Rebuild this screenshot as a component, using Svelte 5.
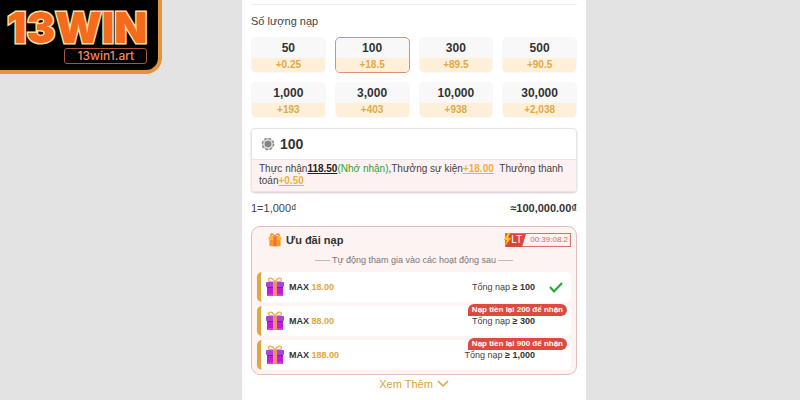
<script>
  let amounts = [
    { value: 50, bonus: '+0.25' },
    { value: 100, bonus: '+18.5' },
    { value: 300, bonus: '+89.5' },
    { value: 500, bonus: '+90.5' },
    { value: 1000, bonus: '+193' },
    { value: 3000, bonus: '+403' },
    { value: 10000, bonus: '+938' },
    { value: 30000, bonus: '+2,038' }
  ];

  let offers = [
    { max: '18.00', total: '100', done: true },
    { max: '88.00', total: '300', hint: 'Nạp tiền lại 200 để nhận' },
    { max: '188.00', total: '1,000', hint: 'Nạp tiền lại 900 để nhận' }
  ];

  let selected = 100;
  let amount = '100';

  const format = (n) => n.toLocaleString('en-US');

  function choose(item) {
    selected = item.value;
    amount = format(item.value);
  }
</script>

<a class="logo" href="/">
  <span class="logo-name">13WIN</span>
  <span class="logo-site">13win1.art</span>
</a>

<main>
  <h2 class="title">Số lượng nạp</h2>

  <div class="amounts">
    {#each amounts as item (item.value)}
      <button type="button" class="amount" class:active={item.value === selected} on:click={() => choose(item)}>
        <strong>{format(item.value)}</strong>
        <span>{item.bonus}</span>
      </button>
    {/each}
  </div>

  <div class="entry">
    <label class="entry-field">
      <svg width="14" height="14" viewBox="0 0 14 14" aria-hidden="true">
        <circle cx="7" cy="7" r="5.6" fill="#d8d8d8" stroke="#c4c4c4" stroke-width="1" />
        <circle cx="7" cy="7" r="5.6" fill="none" stroke="#888" stroke-width="1.6" stroke-dasharray="2.2 2.2" />
        <circle cx="7" cy="7" r="3.3" fill="#858585" />
      </svg>
      <input type="text" aria-label="Số lượng nạp" bind:value={amount} />
    </label>
    <p class="received">
      Thực nhận<b class="sum">118.50</b><span class="green">(Nhớ nhận)</span>,Thưởng sự kiện<b class="plus">+18.00</b>
      &nbsp;Thưởng thanh toán<b class="plus">+0.50</b>
    </p>
  </div>

  <div class="rate">
    <span>1=1,000₫</span>
    <strong>≈100,000.00₫</strong>
  </div>

  <section class="promo">
    <header>
      <svg width="14" height="14" viewBox="0 0 20 20" aria-hidden="true">
        <path d="M10 5C7 0 3 1 4 4c1 2 4 1 6 1 2 0 5 1 6-1 1-3-3-4-6 1z" fill="none" stroke="#f08a3c" stroke-width="2" />
        <rect x="2" y="9" width="16" height="10" rx="2" fill="#f39a20" />
        <rect x="1" y="5" width="18" height="5" rx="1" fill="#ffb52e" />
        <rect x="8" y="5" width="4" height="14" fill="#f4694a" />
      </svg>
      <h2>Ưu đãi nạp</h2>
      <div class="timer">
        <span class="tag">
          <svg width="22" height="14" viewBox="0 0 22 14" aria-hidden="true">
            <path d="M2 1h20l-4 13H2z" fill="#dc4638" />
            <path d="M4 0L0 7h3l-2 6 6-8H4l2-5z" fill="#ffc928" stroke="#f39a20" stroke-width=".5" />
          </svg>
          <b>LT</b>
        </span>
        <time>00:39:08.2</time>
      </div>
    </header>

    <p class="note">Tự động tham gia vào các hoạt động sau</p>

    <ul>
      {#each offers as offer (offer.max)}
        <li>
          <svg class="gift" width="20" height="20" viewBox="0 0 20 20" aria-hidden="true">
            <path d="M10 5C7-1 2 1 4 4c1 1 4 1 6 1 2 0 5 0 6-1 2-3-3-5-6 1z" fill="none" stroke="#f3ab58" stroke-width="1.4" />
            <path d="M2 9h16v9q0 1-1 1H3q-1 0-1-1z" fill="#c01cdc" />
            <path d="M2 9h16v2H2z" fill="#9412b4" />
            <rect x="1" y="5" width="18" height="5" rx="1" fill="#a445d8" />
            <path d="M8 5h4v14H8z" fill="#f58a66" />
            <path d="M3 17h5v2H3zM12 17h5v2h-5z" fill="#d83be6" />
          </svg>
          <b class="max">MAX <span>{offer.max}</span></b>
          <span class="total">Tổng nạp <b>≥ {offer.total}</b></span>
          {#if offer.done}
            <svg class="check" width="14" height="11" viewBox="0 0 14 11" aria-label="Đã đạt">
              <path d="M1 5l4 4.500L13 1" fill="none" stroke="#23a82c" stroke-width="2" />
            </svg>
          {/if}
          {#if offer.hint}
            <span class="hint">{offer.hint}</span>
          {/if}
        </li>
      {/each}
    </ul>
  </section>

  <button type="button" class="more">
    Xem Thêm
    <svg width="12" height="8" viewBox="0 0 12 8" aria-hidden="true">
      <path d="M1 1l5 5 5-5" fill="none" stroke="#d9a23c" stroke-width="1.500" />
    </svg>
  </button>
</main>

<style>
  :global(body) {
    margin: 0;
    background: #e3e3e3;
    font-family: 'Liberation Sans', Arial, sans-serif;
    color: #444;
  }

  h2,
  p,
  ul {
    margin: 0;
    padding: 0;
  }

  button {
    font-family: inherit;
    cursor: pointer;
  }

  .logo {
    position: absolute;
    top: 0;
    left: 0;
    display: flex;
    flex-direction: column;
    align-items: flex-end;
    padding: 6px 11px 6px 7px;
    border: solid #e2953f;
    border-width: 0 4px 4px 0;
    border-radius: 0 0 16px 0;
    background: #000;
    text-decoration: none;
  }

  .logo-name {
    font: 900 43px/42px Inter, sans-serif;
    color: #f56a1c;
    -webkit-text-stroke: 3px #ffe2a0;
    paint-order: stroke fill;
  }

  .logo-site {
    width: 83px;
    box-sizing: border-box;
    border: 1px solid #a8583a;
    border-radius: 3px;
    font: 500 12px/14px Inter, sans-serif;
    color: #f08a60;
    text-align: center;
  }

  main {
    width: 43%;
    min-height: 100vh;
    box-sizing: border-box;
    margin: 0 auto;
    padding: 4px 9px 0;
    background: #fff;
    position: relative;
    left: 14px;
  }

  .title {
    padding: 8px 0;
    border-top: 1px solid #eee;
    font-size: 11px;
    line-height: 16px;
    font-weight: normal;
  }

  .amounts {
    display: grid;
    grid-template-columns: repeat(4, 1fr);
    gap: 9px;
  }

  .amount {
    display: flex;
    flex-direction: column;
    padding: 0;
    border: 1px solid #f8f8f8;
    border-radius: 5px;
    background: #f8f8f8;
    overflow: hidden;
  }

  .amount.active {
    border-color: #dd9070;
  }

  .amount strong {
    width: 100%;
    font-size: 12px;
    line-height: 20px;
    color: #333;
  }

  .amount span {
    width: 100%;
    background: #fef0d8;
    font-size: 10px;
    line-height: 14px;
    font-weight: bold;
    color: #dfaa48;
  }

  .entry {
    margin-top: 10px;
    border: 1px solid #e8e4e4;
    border-radius: 4px;
    box-shadow: 0 1px 2px #d8c8c8;
    overflow: hidden;
  }

  .entry-field {
    display: flex;
    align-items: center;
    gap: 5px;
    height: 30px;
    padding: 0 9px;
  }

  .entry-field input {
    flex: 1;
    min-width: 0;
    padding: 0;
    border: 0;
    outline: 0;
    background: none;
    font: bold 14px 'Liberation Sans', Arial, sans-serif;
    color: #333;
  }

  .received {
    padding: 3px 7px 4px;
    border-top: 1px solid #eee4e4;
    background: #fdf2f1;
    font-size: 10px;
    line-height: 12px;
  }

  .received b {
    text-decoration: underline;
  }

  .sum {
    color: #222;
  }

  .green {
    color: #2aa52e;
  }

  .plus {
    color: #eeb03c;
  }

  .rate {
    display: flex;
    justify-content: space-between;
    padding: 8px 0 10px;
    font-size: 11px;
    line-height: 16px;
  }

  .rate strong {
    color: #333;
  }

  .promo {
    padding: 4px 5px;
    border: 1px solid #e6bcb8;
    border-radius: 9px;
    background: #fdf3f2;
  }

  .promo header {
    display: flex;
    align-items: center;
    gap: 4px;
    padding-left: 11px;
  }

  .promo h2 {
    flex: 1;
    font-size: 11px;
    line-height: 18px;
    color: #333;
  }

  .timer {
    display: flex;
    box-sizing: border-box;
    height: 14px;
    border: 1px solid #dc7069;
    font-size: 8px;
    line-height: 12px;
    color: #d96a62;
  }

  .timer time {
    padding: 0 2px 0 4px;
  }

  .tag {
    display: grid;
    margin: -1px 0 -1px -2px;
    font-size: 10px;
    line-height: 14px;
  }

  .tag > * {
    grid-area: 1 / 1;
  }

  .tag b {
    padding-left: 7px;
    font-weight: normal;
    color: #fff;
  }

  .note {
    display: flex;
    align-items: center;
    justify-content: center;
    gap: 2px;
    font-size: 9px;
    line-height: 16px;
    padding: 3px 0 4px;
    color: #777;
  }

  .note::before,
  .note::after {
    content: '';
    width: 15px;
    border-top: 1px solid #bbb;
  }

  ul {
    display: flex;
    flex-direction: column;
    gap: 4px;
    list-style: none;
  }

  li {
    position: relative;
    display: flex;
    align-items: center;
    height: 30px;
    box-sizing: border-box;
    padding: 0 36px 0 4px;
    border-left: 4px solid #e0a73f;
    border-radius: 5px;
    background: #fff;
    font-size: 9px;
  }

  .max {
    flex: 1;
    padding-left: 4px;
    color: #333;
  }

  .max span {
    color: #dfa640;
  }

  .total b {
    color: #333;
  }

  .check {
    position: absolute;
    right: 8px;
  }

  .hint {
    position: absolute;
    top: -2px;
    right: 4px;
    padding: 0 4px;
    border-radius: 6px 6px 6px 0;
    background: #dc4b3f;
    font-size: 8px;
    font-weight: bold;
    line-height: 12px;
    color: #fff;
  }

  .more {
    display: flex;
    align-items: center;
    gap: 4px;
    margin: 0 auto;
    padding: 0;
    border: 0;
    background: none;
    font-size: 11px;
    line-height: 18px;
    color: #d9a23c;
  }
</style>
